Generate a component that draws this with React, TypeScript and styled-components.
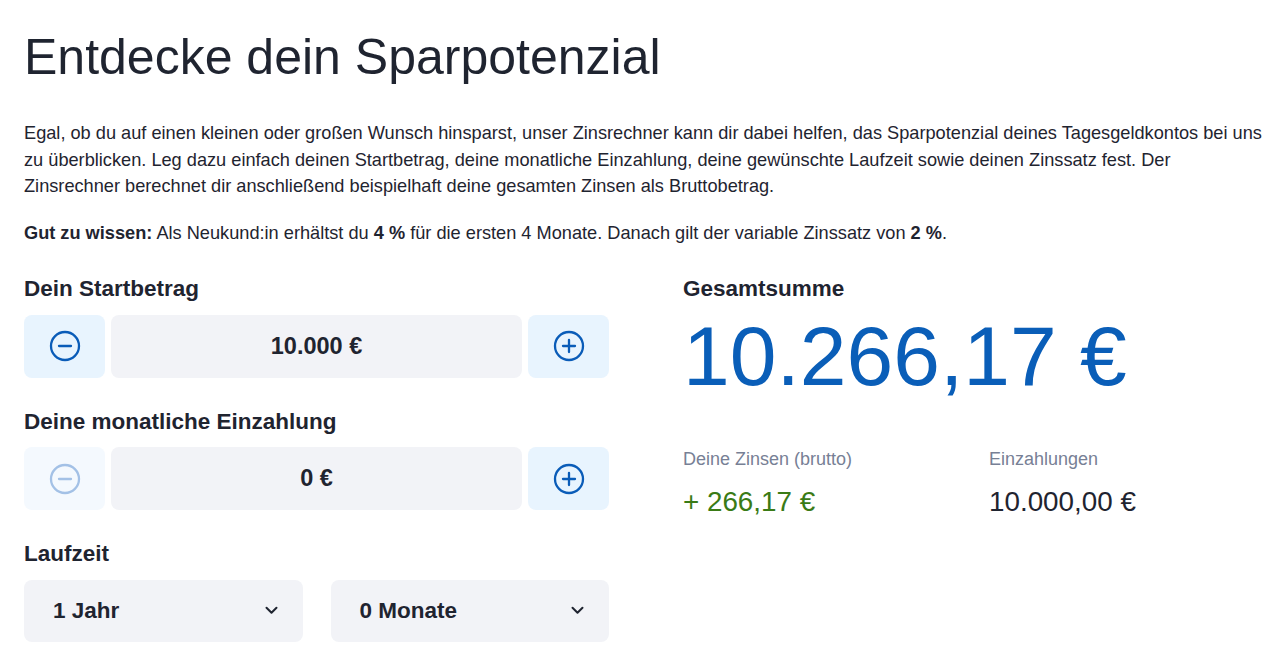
import React from "react";
import styled, { createGlobalStyle } from "styled-components";

const GlobalStyle = createGlobalStyle`
  html, body {
    margin: 0;
    padding: 0;
    background: #ffffff;
  }
  body {
    font-family: "Liberation Sans", Arial, Helvetica, sans-serif;
    color: #1f2430;
    -webkit-font-smoothing: antialiased;
  }
  * { box-sizing: border-box; }
`;

const Page = styled.main`
  padding: 27px 16px 0 24px;
`;

const Title = styled.h1`
  margin: 0;
  font-size: 50px;
  line-height: 60px;
  font-weight: 400;
  color: #1f2430;
  letter-spacing: 0;
`;

const Intro = styled.p`
  margin: 33px 0 0;
  font-size: 18.2px;
  line-height: 26.5px;
  color: #1f2430;
`;

const Hint = styled.p`
  margin: 20px 0 0;
  font-size: 18.2px;
  line-height: 26.5px;
  color: #1f2430;
  b { font-weight: 700; }
`;

const Columns = styled.div`
  display: grid;
  grid-template-columns: 585px 1fr;
  column-gap: 74px;
  margin-top: 28px;
`;

const Column = styled.section`
  display: flex;
  flex-direction: column;
  gap: 29px;
`;

const Field = styled.div`
  display: flex;
  flex-direction: column;
  gap: 10.5px;
`;

const Label = styled.h2`
  margin: 0;
  font-size: 22.5px;
  line-height: 30px;
  font-weight: 700;
  color: #1f2430;
`;

const Stepper = styled.div`
  display: grid;
  grid-template-columns: 81px 1fr 81px;
  gap: 6px;
  height: 63px;
`;

const StepButton = styled.button<{ $disabled?: boolean }>`
  display: flex;
  align-items: center;
  justify-content: center;
  border: none;
  border-radius: 8px;
  padding: 0;
  cursor: ${(p) => (p.$disabled ? "default" : "pointer")};
  background: ${(p) => (p.$disabled ? "#f4f9fe" : "#e8f4fe")};
  color: ${(p) => (p.$disabled ? "#a3c1e6" : "#0a5cb8")};
`;

const ValueBox = styled.div`
  display: flex;
  align-items: center;
  justify-content: center;
  border-radius: 8px;
  background: #f2f3f7;
  font-size: 23.5px;
  font-weight: 700;
  color: #1f2430;
`;

const SelectRow = styled.div`
  display: grid;
  grid-template-columns: 1fr 1fr;
  gap: 28px;
`;

const SelectButton = styled.button`
  display: flex;
  align-items: center;
  justify-content: space-between;
  height: 62px;
  padding: 0 25px 0 29px;
  border: none;
  border-radius: 8px;
  background: #f2f3f7;
  font-family: inherit;
  font-size: 22.5px;
  font-weight: 700;
  color: #1f2430;
  cursor: pointer;
`;

const ResultColumn = styled.section`
  display: flex;
  flex-direction: column;
`;

const Total = styled.div`
  margin-top: 10px;
  font-size: 84px;
  line-height: 84px;
  font-weight: 400;
  color: #0a5eb8;
  white-space: nowrap;
`;

const Stats = styled.div`
  display: grid;
  grid-template-columns: 286px 1fr;
  column-gap: 20px;
  margin-top: 48px;
`;

const Stat = styled.div`
  display: flex;
  flex-direction: column;
  gap: 11.5px;
`;

const StatLabel = styled.span`
  font-size: 18px;
  line-height: 26px;
  color: #778095;
`;

const StatValue = styled.span<{ $tone?: "positive" }>`
  font-size: 27.8px;
  line-height: 36px;
  color: ${(p) => (p.$tone === "positive" ? "#3a7b16" : "#1f2430")};
  white-space: nowrap;
`;

const CircleIcon = ({ plus }: { plus?: boolean }) => (
  <svg width="32" height="32" viewBox="0 0 32 32" fill="none" aria-hidden="true">
    <circle cx="16" cy="16" r="14" stroke="currentColor" strokeWidth="2.3" />
    <line x1="10" y1="16" x2="22" y2="16" stroke="currentColor" strokeWidth="2.3" strokeLinecap="round" />
    {plus && (
      <line x1="16" y1="10" x2="16" y2="22" stroke="currentColor" strokeWidth="2.3" strokeLinecap="round" />
    )}
  </svg>
);

const Chevron = () => (
  <svg width="13" height="9" viewBox="0 0 13 9" fill="none" aria-hidden="true">
    <path d="M1.5 1.8 L6.5 6.8 L11.5 1.8" stroke="#1f2430" strokeWidth="2" strokeLinecap="round" strokeLinejoin="round" />
  </svg>
);

const StepperField = ({
  label,
  value,
  minusDisabled,
}: {
  label: string;
  value: string;
  minusDisabled?: boolean;
}) => (
  <Field>
    <Label>{label}</Label>
    <Stepper>
      <StepButton $disabled={minusDisabled} aria-label="Verringern">
        <CircleIcon />
      </StepButton>
      <ValueBox>{value}</ValueBox>
      <StepButton aria-label="Erhöhen">
        <CircleIcon plus />
      </StepButton>
    </Stepper>
  </Field>
);

export default function App() {
  return (
    <>
      <GlobalStyle />
      <Page>
        <Title>Entdecke dein Sparpotenzial</Title>
        <Intro>
          Egal, ob du auf einen kleinen oder großen Wunsch hinsparst, unser Zinsrechner kann dir dabei helfen, das
          Sparpotenzial deines Tagesgeldkontos bei uns zu überblicken. Leg dazu einfach deinen Startbetrag, deine
          monatliche Einzahlung, deine gewünschte Laufzeit sowie deinen Zinssatz fest. Der Zinsrechner berechnet dir
          anschließend beispielhaft deine gesamten Zinsen als Bruttobetrag.
        </Intro>
        <Hint>
          <b>Gut zu wissen:</b> Als Neukund:in erhältst du <b>4 %</b> für die ersten 4 Monate. Danach gilt der variable
          Zinssatz von <b>2 %</b>.
        </Hint>
        <Columns>
          <Column>
            <StepperField label="Dein Startbetrag" value="10.000 €" />
            <StepperField label="Deine monatliche Einzahlung" value="0 €" minusDisabled />
            <Field>
              <Label>Laufzeit</Label>
              <SelectRow>
                <SelectButton>
                  <span>1 Jahr</span>
                  <Chevron />
                </SelectButton>
                <SelectButton>
                  <span>0 Monate</span>
                  <Chevron />
                </SelectButton>
              </SelectRow>
            </Field>
          </Column>
          <ResultColumn>
            <Label>Gesamtsumme</Label>
            <Total>10.266,17 €</Total>
            <Stats>
              <Stat>
                <StatLabel>Deine Zinsen (brutto)</StatLabel>
                <StatValue $tone="positive">+ 266,17 €</StatValue>
              </Stat>
              <Stat>
                <StatLabel>Einzahlungen</StatLabel>
                <StatValue>10.000,00 €</StatValue>
              </Stat>
            </Stats>
          </ResultColumn>
        </Columns>
      </Page>
    </>
  );
}
